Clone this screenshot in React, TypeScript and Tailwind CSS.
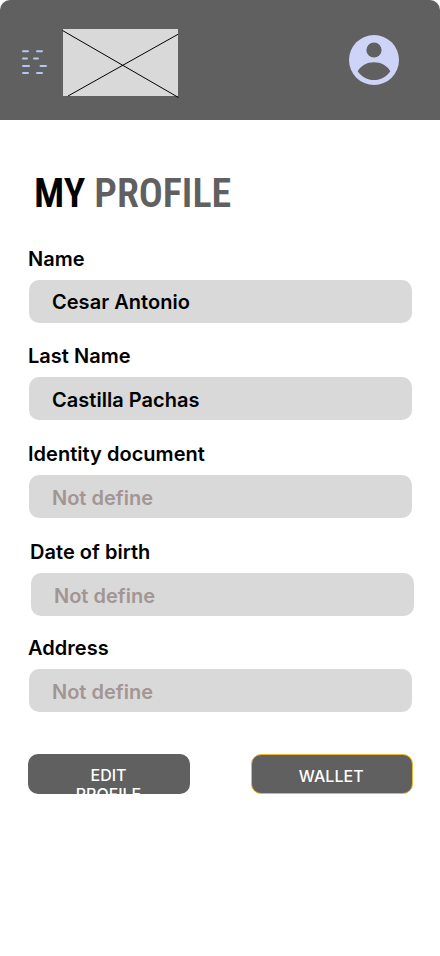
type FieldProps = {
  label: string;
  value: string;
  filled?: boolean;
  className?: string;
  textClass?: string;
};

function Field({ label, value, filled = false, className = '', textClass = 'pt-[11px]' }: FieldProps) {
  return (
    <div className={`w-[384px] ${className}`}>
      <div className="h-[33px] text-[20px] leading-6 font-semibold tracking-[0.03px] text-black">{label}</div>
      <div
        className={`ml-px h-[43px] w-[383px] rounded-[10px] bg-[#d9d9d9] pl-[23px] text-[20px] leading-6 font-semibold ${textClass} ${
          filled ? 'tracking-[0.03px] text-black' : 'text-[#a39594]'
        }`}
      >
        {value}
      </div>
    </div>
  );
}

function MenuIcon() {
  return (
    <svg width="26" height="26" viewBox="0 0 26 26" fill="none" stroke="#b3c7f3" strokeWidth="2" strokeLinecap="round">
      <path d="M1 2.2h5M15 2.2h5M1 9.5h4M12 9.5h4M1 16.9h6M18.5 16.9h5.5M1 24.1h5M15 24.1h5" />
    </svg>
  );
}

function AvatarIcon() {
  return (
    <svg width="50" height="50" viewBox="0 0 50 50">
      <circle cx="25" cy="25" r="25" fill="#cdd4f7" />
      <circle cx="25" cy="15" r="7.6" fill="#606060" />
      <path d="M8.7 36.2C12.5 30 18 27.200 25 27.200S37.500 30 41.300 36.200C37.500 42 31.500 45 25 45S12.500 42 8.700 36.200Z" fill="#606060" />
    </svg>
  );
}

function LogoPlaceholder() {
  return (
    <svg width="117" height="69" viewBox="0 0 117 69" fill="none">
      <path d="M1 0h115v67H1z" fill="#d9d9d9" />
      <path d="M.5 1.5L116.500 68.500M6 67L116 5.300" stroke="black" />
    </svg>
  );
}

export default function App() {
  return (
    <main className="h-[956px] w-[440px] overflow-hidden bg-white font-['Inter',sans-serif]">
      <header className="flex h-[120px] items-start rounded-t-[10px] bg-[#606060] pl-[22px]">
        <div className="pt-[49px]">
          <MenuIcon />
        </div>
        <div className="ml-[14px] pt-[29px]">
          <LogoPlaceholder />
        </div>
        <div className="ml-[170px] pt-[35px]">
          <AvatarIcon />
        </div>
      </header>
      <h1 className="mt-[50px] ml-[34px] h-[47px] text-[40px] leading-[47px] font-semibold tracking-[-0.06px] whitespace-nowrap text-black [font-family:'Roboto_Condensed',Roboto,sans-serif] [font-stretch:75%]">
        MY <span className="text-[#606060]">PROFILE</span>
      </h1>
      <section className="ml-[28px] pt-[30px]">
        <Field label="Name" value="Cesar Antonio" filled textClass="pt-[10px]" />
        <Field label="Last Name" value="Castilla Pachas" filled className="mt-[21px]" />
        <Field label="Identity document" value="Not define" className="mt-[22px]" />
        <Field label="Date of birth" value="Not define" className="mt-[22px] ml-[2px]" />
        <Field label="Address" value="Not define" className="mt-[20px]" />
      </section>
      <div className="mt-[42px] flex gap-[61px] pl-[28px] text-center text-[16px] font-medium text-white">
        <button className="flex h-10 w-[162px] items-start justify-center overflow-hidden rounded-[10px] bg-[#606060] pt-[12px] pr-px leading-[19px]">
          <span className="w-[100px]">EDIT PROFILE</span>
        </button>
        <button className="h-10 w-[161.5px] rounded-[10px] border border-[#edb92e] bg-[#606060] pt-[5px] pr-px leading-[19px] tracking-[0.04px]">
          WALLET
        </button>
      </div>
    </main>
  );
}
